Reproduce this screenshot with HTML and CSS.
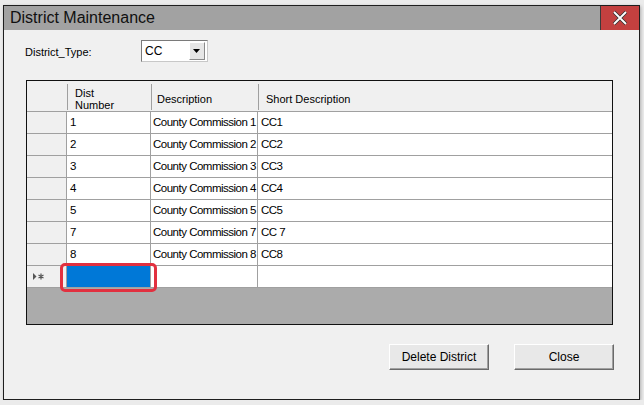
FILE: index.html
```html
<!DOCTYPE html>
<html lang="en">
<head>
    <meta charset="UTF-8">
    <title>District Maintenance</title>
    <link rel="stylesheet" href="styles.css">
</head>
<body>
    <div class="window">
        <div class="titlebar">
            <span class="title">District Maintenance</span>
            <span class="close-btn">
                <svg width="16" height="16" viewBox="0 0 16 16">
                    <path d="M2 2 L14 14 M14 2 L2 14" stroke="#333" stroke-width="3.4"/>
                    <path d="M2 2 L14 14 M14 2 L2 14" stroke="#fff" stroke-width="1.8"/>
                </svg>
            </span>
        </div>
        <div class="content">
            <div class="type-row">
                <label class="type-label">District_Type:</label>
                <div class="combo">
                    <span class="combo-value">CC</span>
                    <span class="combo-arrow">
                        <svg width="8" height="5" viewBox="0 0 8 5"><path d="M0 0 H7 L3.5 4 Z" fill="#000"/></svg>
                    </span>
                </div>
            </div>

            <div class="grid">
                <div class="grid-head">
                    <div class="rowhead"></div>
                    <div class="hcell col-num">Dist<br>Number</div>
                    <div class="hcell col-desc">Description</div>
                    <div class="hcell col-short">Short Description</div>
                </div>
                <div class="grid-row">
                    <div class="rowhead"></div>
                    <div class="cell col-num">1</div>
                    <div class="cell col-desc">County Commission 1</div>
                    <div class="cell col-short">CC1</div>
                </div>
                <div class="grid-row">
                    <div class="rowhead"></div>
                    <div class="cell col-num">2</div>
                    <div class="cell col-desc">County Commission 2</div>
                    <div class="cell col-short">CC2</div>
                </div>
                <div class="grid-row">
                    <div class="rowhead"></div>
                    <div class="cell col-num">3</div>
                    <div class="cell col-desc">County Commission 3</div>
                    <div class="cell col-short">CC3</div>
                </div>
                <div class="grid-row">
                    <div class="rowhead"></div>
                    <div class="cell col-num">4</div>
                    <div class="cell col-desc">County Commission 4</div>
                    <div class="cell col-short">CC4</div>
                </div>
                <div class="grid-row">
                    <div class="rowhead"></div>
                    <div class="cell col-num">5</div>
                    <div class="cell col-desc">County Commission 5</div>
                    <div class="cell col-short">CC5</div>
                </div>
                <div class="grid-row">
                    <div class="rowhead"></div>
                    <div class="cell col-num">7</div>
                    <div class="cell col-desc">County Commission 7</div>
                    <div class="cell col-short">CC 7</div>
                </div>
                <div class="grid-row">
                    <div class="rowhead"></div>
                    <div class="cell col-num">8</div>
                    <div class="cell col-desc">County Commission 8</div>
                    <div class="cell col-short">CC8</div>
                </div>
                <div class="grid-row new-row">
                    <div class="rowhead">
                        <svg width="12" height="7" viewBox="0 0 12 7">
                            <path d="M0 0 L3.5 3.5 L0 7 Z" fill="#555"/>
                            <path d="M8 0.5 V6.5 M5.5 2 L10.5 5 M10.5 2 L5.5 5" stroke="#555" stroke-width="1.2"/>
                        </svg>
                    </div>
                    <div class="cell col-num selected">
                        <span class="highlight"></span>
                    </div>
                    <div class="cell col-desc"></div>
                    <div class="cell col-short"></div>
                </div>
            </div>

            <div class="buttons">
                <button class="btn">Delete District</button>
                <button class="btn">Close</button>
            </div>
        </div>
    </div>
</body>
</html>
```

FILE: styles.css
```css
body {
    margin: 0;
    background-color: #ebebeb;
    font-family: "Liberation Sans", Arial, sans-serif;
    font-size: 11px;
    color: #000;
}
.window {
    margin: 5px 0 0 3px;
    width: 637px;
    height: 395px;
    box-sizing: border-box;
    border: 1px solid #1e1e1e;
    background-color: #f0f0f0;
    box-shadow: 1px 1px 3px rgba(0, 0, 0, 0.25);
}
.titlebar {
    display: flex;
    justify-content: space-between;
    height: 24px;
    background-color: #a2a2a2;
}
.title {
    padding-left: 6px;
    font-size: 16px;
    line-height: 24px;
    color: #101010;
}
.close-btn {
    display: flex;
    align-items: center;
    justify-content: center;
    width: 38px;
    background-color: #c3403f;
    border-left: 1px solid #3a3a3a;
}
.content {
    padding: 10px 25px 0 21px;
}
.type-row {
    display: flex;
    align-items: center;
    height: 22px;
}
.type-label {
    width: 116px;
    font-size: 11px;
    padding-top: 2px;
}
.combo {
    display: flex;
    align-items: center;
    justify-content: space-between;
    width: 67px;
    height: 22px;
    box-sizing: border-box;
    border: 1px solid #7a7a7a;
    border-right-color: #c8c8c8;
    border-bottom-color: #c8c8c8;
    background-color: #fff;
    padding: 2px;
}
.combo-value {
    padding-left: 1px;
    font-size: 12px;
}
.combo-arrow {
    display: flex;
    align-items: center;
    justify-content: center;
    width: 14px;
    height: 16px;
    background-color: #e6e6e6;
    border: 1px solid #fff;
    border-right-color: #8a8a8a;
    border-bottom-color: #8a8a8a;
}
.grid {
    margin-top: 18px;
    margin-left: 1px;
    width: 587px;
    height: 245px;
    box-sizing: border-box;
    border: 1px solid #111;
    background-color: #ababab;
}
.grid-head {
    display: flex;
    height: 31px;
    box-sizing: border-box;
    background-color: #f0f0f0;
    border-bottom: 1px solid #a0a0a0;
}
.grid-row {
    display: flex;
    height: 22px;
    box-sizing: border-box;
    background-color: #fff;
    border-bottom: 1px solid #a0a0a0;
}
.rowhead {
    width: 40px;
    flex: none;
    box-sizing: border-box;
    background-color: #f0f0f0;
    border-right: 1px solid #a0a0a0;
}
.grid-row .rowhead {
    margin-bottom: -1px;
    border-bottom: 1px solid #a0a0a0;
    box-shadow: inset 3px 0 0 #f0f0f0;
}
.grid-head .rowhead {
    border-right: none;
}
.new-row .rowhead {
    display: flex;
    align-items: center;
    padding-left: 6px;
}
.hcell {
    box-sizing: border-box;
    padding: 3px 0 0 7px;
    line-height: 12px;
    display: flex;
    align-items: center;
    border-left: 1px solid #a0a0a0;
    margin-top: 3px;
    margin-bottom: 1px;
}
.cell {
    box-sizing: border-box;
    padding: 0 2px 0 3px;
    font-size: 11.5px;
    letter-spacing: -0.5px;
    line-height: 21px;
    white-space: nowrap;
    border-right: 1px solid #a0a0a0;
}
.col-num {
    width: 84px;
}
.col-desc {
    width: 107px;
}
.col-short {
    flex: 1;
}
.grid-head .col-desc {
    padding-left: 5px;
}
.cell.col-desc {
    padding-left: 2px;
}
.cell.col-short {
    border-right: none;
}
.selected {
    position: relative;
    background-color: #0078d7;
}
.highlight {
    position: absolute;
    left: -7px;
    top: -3px;
    width: 97px;
    height: 29px;
    box-sizing: border-box;
    border: 3px solid #e2303f;
    border-radius: 5px;
}
.buttons {
    display: flex;
    justify-content: flex-end;
    gap: 25px;
    margin-top: 19px;
}
.btn {
    width: 100px;
    height: 26px;
    font-family: "Liberation Sans", Arial, sans-serif;
    font-size: 12px;
    color: #000;
    background-color: #e8e8e8;
    border: 1px solid #fff;
    border-right-color: #6a6a6a;
    border-bottom-color: #6a6a6a;
    box-shadow: inset -1px -1px 0 #a0a0a0;
    padding: 0;
}
```
